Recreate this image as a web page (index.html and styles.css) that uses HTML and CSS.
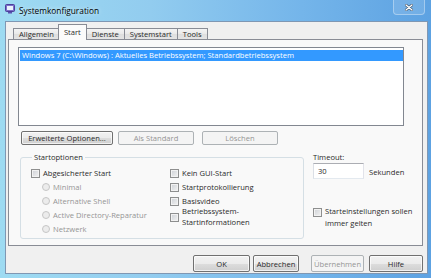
FILE: index.html
```html
<!DOCTYPE html>
<html lang="de">
<head>
  <meta charset="UTF-8" />
  <title>Systemkonfiguration</title>
  <link rel="stylesheet" href="styles.css">
</head>
<body>
  <div class="window">
    <!-- Title bar -->
    <div class="titlebar">
      <svg class="app-icon" viewBox="0 0 10 10" width="10" height="10">
        <rect x="0.5" y="0.5" width="9" height="7" rx="1" fill="#7b6fc9" stroke="#4c3f9a"/>
        <rect x="2" y="2" width="6" height="4" fill="#e9f1fb"/>
        <rect x="3" y="8" width="4" height="1.5" fill="#5a4fb0"/>
      </svg>
      <span class="title">Systemkonfiguration</span>
      <div class="close-btn">
        <svg viewBox="0 0 8 7" width="8" height="7">
          <path d="M1 1 L7 6 M7 1 L1 6" stroke="#3b4f66" stroke-width="2.6" stroke-linecap="round"/>
          <path d="M1 1 L7 6 M7 1 L1 6" stroke="#ffffff" stroke-width="1.4" stroke-linecap="round"/>
        </svg>
      </div>
    </div>

    <div class="client">
      <!-- Tabs -->
      <div class="tabs">
        <div class="tab">Allgemein</div>
        <div class="tab active">Start</div>
        <div class="tab">Dienste</div>
        <div class="tab">Systemstart</div>
        <div class="tab">Tools</div>
      </div>

      <div class="panel">
        <div class="os-list">
          <div class="os-item selected">Windows 7 (C:\Windows) : Aktuelles Betriebssystem; Standardbetriebssystem</div>
        </div>

        <div class="list-actions">
          <button class="btn btn-advanced">Erweiterte Optionen...</button>
          <button class="btn btn-default" disabled>Als Standard</button>
          <button class="btn btn-delete" disabled>Löschen</button>
        </div>

        <div class="options-row">
          <fieldset class="boot-options">
            <legend>Startoptionen</legend>
            <div class="option-cols">
              <div class="col-left">
                <label class="opt"><input type="checkbox"><span>Abgesicherter Start</span></label>
                <label class="opt sub disabled"><input type="radio" name="safe" disabled><span>Minimal</span></label>
                <label class="opt sub disabled"><input type="radio" name="safe" disabled><span>Alternative Shell</span></label>
                <label class="opt sub disabled"><input type="radio" name="safe" disabled><span>Active Directory-Reparatur</span></label>
                <label class="opt sub disabled"><input type="radio" name="safe" disabled><span>Netzwerk</span></label>
              </div>
              <div class="col-right">
                <label class="opt"><input type="checkbox"><span>Kein GUI-Start</span></label>
                <label class="opt"><input type="checkbox"><span>Startprotokollierung</span></label>
                <label class="opt"><input type="checkbox"><span>Basisvideo</span></label>
                <label class="opt multi"><input type="checkbox"><span>Betriebssystem-<br>Startinformationen</span></label>
              </div>
            </div>
          </fieldset>

          <div class="side">
            <div class="timeout-label">Timeout:</div>
            <div class="timeout-row">
              <input class="timeout-input" type="text" value="30">
              <span>Sekunden</span>
            </div>
            <label class="opt multi persist"><input type="checkbox"><span>Starteinstellungen sollen<br>immer gelten</span></label>
          </div>
        </div>
      </div>

      <!-- Dialog buttons -->
      <div class="dialog-buttons">
        <button class="btn btn-ok">OK</button>
        <button class="btn btn-cancel">Abbrechen</button>
        <button class="btn btn-apply" disabled>Übernehmen</button>
        <button class="btn btn-help">Hilfe</button>
      </div>
    </div>
  </div>
</body>
</html>
```

FILE: styles.css
```css
* {
  box-sizing: border-box;
}

body {
  margin: 0;
  font-family: "Open Sans", "Noto Sans", sans-serif;
  font-size: 7.6px;
  color: #2a2a2a;
  overflow: hidden;
}

.window {
  width: 431px;
  height: 278px;
  display: flex;
  flex-direction: column;
  background: linear-gradient(to right, #9edbf2 0%, #92ccef 35%, #74b5ea 70%, #5da2e2 100%);
}

/* title bar */

.titlebar {
  height: 21px;
  display: flex;
  align-items: flex-start;
  flex: none;
}

.app-icon {
  margin: 4px 4px 0 5px;
}

.title {
  font-size: 8.3px;
  line-height: 12px;
  margin-top: 5px;
  color: #000;
  text-shadow: 0 0 4px rgba(255, 255, 255, 0.8);
}

.close-btn {
  margin-left: auto;
  margin-right: 6px;
  width: 32px;
  height: 15px;
  display: flex;
  align-items: center;
  justify-content: center;
  border: 1px solid rgba(255, 255, 255, 0.35);
  border-top: none;
  border-radius: 0 0 4px 4px;
  background: rgba(255, 255, 255, 0.12);
}

/* client area */

.client {
  flex: 1;
  margin: 0 3px 4px 5px;
  background: #f0f0f0;
  border: 1px solid #7f97b3;
  display: flex;
  flex-direction: column;
}

.tabs {
  display: flex;
  align-items: flex-end;
  height: 15px;
  margin: 2px 0 0 7px;
}

.tab {
  height: 11px;
  line-height: 10px;
  padding: 0 5px;
  border: 1px solid #898c95;
  border-bottom: none;
  margin-right: -1px;
  background: linear-gradient(#f4f4f4, #e9e9e9 50%, #dedede 51%, #e4e4e4);
}

.tab.active {
  height: 16px;
  line-height: 14px;
  margin: 0 -1px -1px -1px;
  background: #fbfbfb;
  position: relative;
  z-index: 1;
}

.panel {
  margin: 0 4px 0 2px;
  border: 1px solid #898c95;
  background: #f9f9f9;
  padding-bottom: 6px;
}

.os-list {
  margin: 7px 0 0 9px;
  width: 386px;
  height: 79px;
  border: 1px solid #828790;
  background: #fff;
  padding: 2px 0 0 1px;
}

.os-item {
  height: 11px;
  line-height: 11px;
  padding-left: 2px;
  white-space: nowrap;
}

.os-item.selected {
  background: #3399ff;
  color: #fff;
}

/* buttons */

.btn {
  font: inherit;
  color: #2a2a2a;
  height: 14px;
  padding: 0;
  border: 1px solid #707070;
  border-radius: 2px;
  background: linear-gradient(#f2f2f2, #ebebeb 50%, #dddddd 51%, #cfcfcf);
  box-shadow: inset 0 0 0 1px rgba(255, 255, 255, 0.7);
}

.btn:disabled {
  color: #959595;
  border-color: #adb2b5;
  background: #f4f4f4;
  box-shadow: none;
}

.list-actions {
  display: flex;
  margin: 5px 0 0 12px;
}

.btn-advanced {
  width: 92px;
}

.btn-default {
  width: 76px;
  margin-left: 5px;
}

.btn-delete {
  width: 76px;
  margin-left: 8px;
}

/* boot options */

.options-row {
  display: flex;
  align-items: flex-start;
  margin-top: 7px;
}

.boot-options {
  width: 284px;
  margin: 0 0 0 11px;
  padding: 3px 0 2px 10px;
  border: 1px solid #d5dfe5;
  border-radius: 3px;
}

.boot-options legend {
  padding: 0 2px;
  margin-left: 1px;
  line-height: 11px;
}

.option-cols {
  display: flex;
}

.col-left {
  width: 139px;
}

.opt {
  display: flex;
  align-items: center;
  height: 14px;
  line-height: 14px;
  white-space: nowrap;
}

.opt.sub {
  margin-left: 11px;
}

.opt.disabled {
  color: #959595;
}

.opt.multi {
  height: auto;
  line-height: 11px;
  margin-top: -2px;
}

.opt input[type="checkbox"] {
  appearance: none;
  flex: none;
  width: 9px;
  height: 9px;
  margin: 0 3px 0 0;
  border: 1px solid #8e8f8f;
  background: linear-gradient(135deg, #cdd0d5, #f3f3f3);
  box-shadow: inset 0 0 0 1px #f2f2f2;
}

.opt input[type="radio"] {
  appearance: none;
  flex: none;
  width: 8px;
  height: 8px;
  margin: 0 3px 0 0;
  border: 1px solid #c6c6c6;
  border-radius: 50%;
  background: #ececec;
}

.side {
  margin-left: 9px;
}

.timeout-label {
  line-height: 11px;
}

.timeout-row {
  display: flex;
  align-items: center;
  gap: 5px;
}

.timeout-input {
  appearance: none;
  font: inherit;
  width: 51px;
  height: 16px;
  padding: 0 0 0 4px;
  border: 1px solid #abadb3;
  border-color: #abadb3 #e2e3ea #e3e9ef #dbdfe6;
  background: #fff;
  color: #2a2a2a;
}

.timeout-row span {
  padding-top: 2px;
}

.opt.persist {
  align-items: flex-start;
  line-height: 12px;
  margin-top: 26px;
}

.opt.persist input {
  margin-top: 3px;
}

/* dialog buttons */

.dialog-buttons {
  display: flex;
  justify-content: flex-end;
  margin-top: 9px;
  padding-right: 4px;
}

.dialog-buttons .btn {
  height: 17px;
}

.btn-ok {
  width: 57px;
}

.btn-cancel {
  width: 46px;
  margin-left: 3px;
}

.btn-apply {
  width: 53px;
  margin-left: 12px;
}

.btn-help {
  width: 54px;
  margin-left: 5px;
}
```
